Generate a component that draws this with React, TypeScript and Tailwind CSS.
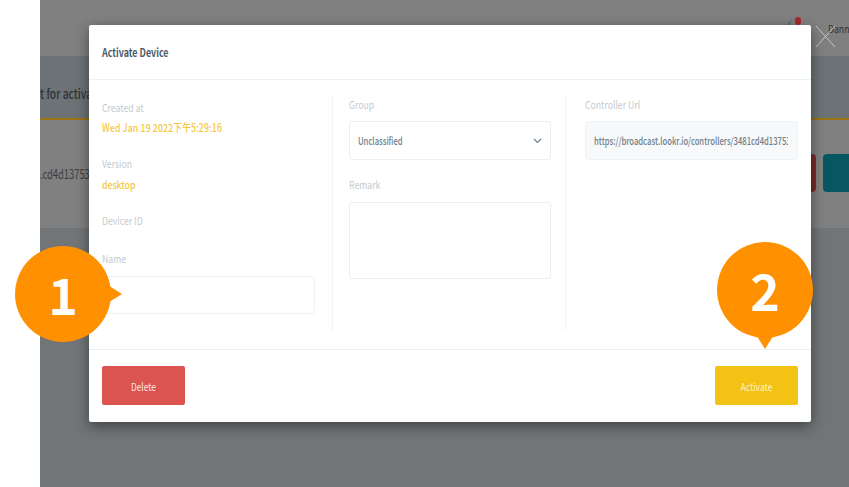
const cjk = "font-['Noto_Sans_CJK_TC','Noto_Sans',sans-serif]";
const squeeze = "origin-left scale-x-[0.79]";
const labelClass = `text-[11px] leading-[14px] text-[#c4cbd0] whitespace-nowrap ${squeeze}`;
const valueClass = `text-[11px] leading-[14px] text-[#f5c842] font-medium whitespace-nowrap ${squeeze}`;
const fieldText = "block origin-left scale-x-[0.73] text-[10.5px] leading-[14px] font-medium text-[#6f7e8b] whitespace-nowrap";

export default function App() {
  return (
    <div className={`relative w-[849px] h-[487px] overflow-hidden bg-white ${cjk}`}>
      {/* page behind the overlay */}
      <div className="ml-10 h-full overflow-hidden flex flex-col bg-[#717577]">
        <div className="h-14 shrink-0 bg-[#808080] flex justify-end items-start pt-[22px]">
          <div className="relative w-3 h-4 mr-[28px] -mt-[3px] rounded-full border-l-2 border-[#666]">
            <span className="absolute -top-[2px] left-[5px] w-[6px] h-2 rounded-full bg-[#a82a2a]" />
          </div>
          <span className="w-[21px] overflow-hidden text-[11px] leading-[12px] text-[#333]">
            <span className="inline-block origin-left scale-x-[0.79]">Danny</span>
          </span>
        </div>
        <div className="h-[64px] shrink-0 bg-[#6c7275] border-b-2 border-[#9a7411] flex items-start pt-[31px]">
          <span className="origin-left scale-x-[0.79] text-[13px] leading-[14px] font-medium text-[#2e3336] whitespace-nowrap">t for activa</span>
        </div>
        <div className="h-[108px] shrink-0 bg-[#808080] flex items-center justify-end">
          <span className="mr-auto origin-left scale-x-[0.72] text-[13px] text-[#3c3f41] whitespace-nowrap">.cd4d13753</span>
          <div className="w-[16px] h-[38px] mt-[-2px] bg-[#7b2b2b] rounded-r-sm" />
          <div className="w-[26px] h-[38px] mt-[-2px] ml-[7px] bg-[#075762] rounded-l-sm" />
        </div>
      </div>

      {/* close icon */}
      <svg className="absolute left-[815px] top-[25px]" width="21" height="23" viewBox="0 0 21 23">
        <path d="M1 1 L20 22 M20 1 L1 22" stroke="#c9c9c9" strokeWidth="1" fill="none" />
      </svg>

      {/* modal */}
      <div className="absolute left-[89px] top-[25px] w-[722px] h-[397px] bg-white rounded-[2px] shadow-[0_4px_14px_rgba(0,0,0,0.45)] flex flex-col">
        <div className="h-[55px] shrink-0 border-b border-[#edf2f6] flex items-center pl-[13px]">
          <h2 className="origin-left scale-x-[0.81] text-[11px] font-bold text-[#4a5a68] whitespace-nowrap">Activate Device</h2>
        </div>

        <div className="h-[269px] shrink-0 flex pt-[17px] pb-[18px]">
          <div className="w-[244px] shrink-0 pl-[13px] pr-[17px] border-r border-[#f0f4f8] pt-[3px]">
            <p className={labelClass}>Created at</p>
            <p className={`${valueClass} mt-[6px] tracking-[0.2px]`}>Wed Jan 19 2022下午5:29:16</p>
            <p className={`${labelClass} mt-[22px]`}>Version</p>
            <p className={`${valueClass} mt-[7px]`}>desktop</p>
            <p className={`${labelClass} mt-[22px]`}>Devicer ID</p>
            <p className={`${labelClass} mt-[24px]`}>Name</p>
            <div className="mt-[11px] h-[38px] border border-[#edf2f6] rounded-[3px]" />
          </div>

          <div className="w-[233px] shrink-0 pl-[16px] pr-[14px] border-r border-[#f0f4f8]">
            <p className={labelClass}>Group</p>
            <div className="mt-[10px] h-[39px] border border-[#e9f0f5] rounded-[3px] flex items-center justify-between pl-[8px] pr-[8px]">
              <span className={fieldText}>Unclassified</span>
              <svg width="9" height="6" viewBox="0 0 9 6">
                <path d="M1 1 L4.5 4.5 L8 1" stroke="#6f7e8b" strokeWidth="1.2" fill="none" />
              </svg>
            </div>
            <p className={`${labelClass} mt-[17px]`}>Remark</p>
            <div className="mt-[11px] h-[77px] border border-[#e9f0f5] rounded-[3px]" />
          </div>

          <div className="flex-1 min-w-0 pl-[19px] pr-[13px]">
            <p className={labelClass}>Controller Url</p>
            <div className="mt-[10px] h-[39px] border border-[#edf2f6] bg-[#f8f9fa] rounded-[3px] flex items-center pl-[8px] pr-[9px]">
              <div className="w-full overflow-hidden">
                <span className={fieldText}>https://broadcast.lookr.io/controllers/3481cd4d13753</span>
              </div>
            </div>
          </div>
        </div>

        <div className="flex-1 border-t border-[#e9eef2] flex justify-between items-start pt-4 px-[13px]">
          <button className="w-[83px] h-[39px] rounded-[2px] bg-[#dc544f] text-[#fbe4e3] flex items-center justify-center">
            <span className="scale-x-[0.76] text-[11px] leading-[14px]">Delete</span>
          </button>
          <button className="w-[83px] h-[39px] rounded-[2px] bg-[#f2c215] text-[#fdf3c8] flex items-center justify-center">
            <span className="scale-x-[0.78] text-[11px] leading-[14px]">Activate</span>
          </button>
        </div>
      </div>

      {/* numbered callouts */}
      <div className="absolute left-[15px] top-[246px] w-24 h-24 rounded-full bg-[#ff9100] flex items-center justify-center">
        <span className="-mt-[3px] text-[50px] leading-none font-bold text-white font-['Noto_Sans_CJK_SC',sans-serif]">1</span>
        <svg className="absolute left-[91px] top-[38px]" width="16" height="20" viewBox="0 0 16 20">
          <path d="M0 0 L16 10 L0 20 Z" fill="#ff9100" />
        </svg>
      </div>
      <div className="absolute left-[717px] top-[242px] w-24 h-24 rounded-full bg-[#ff9100] flex items-center justify-center">
        <span className="-mt-[3px] text-[50px] leading-none font-bold text-white font-['Noto_Sans_CJK_SC',sans-serif]">2</span>
        <svg className="absolute left-[38px] top-[91px]" width="20" height="16" viewBox="0 0 20 16">
          <path d="M0 0 L20 0 L10 16 Z" fill="#ff9100" />
        </svg>
      </div>
    </div>
  );
}
